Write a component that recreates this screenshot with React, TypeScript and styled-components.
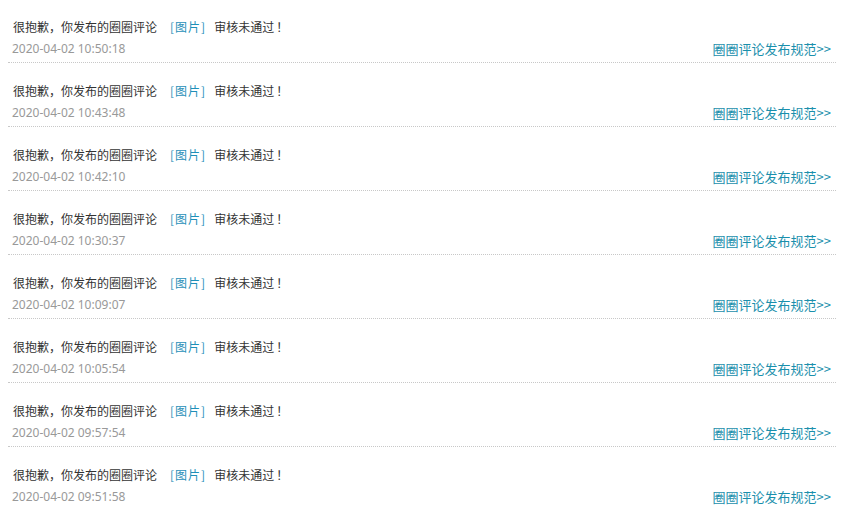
import styled, { createGlobalStyle } from 'styled-components';

const GlobalStyle = createGlobalStyle`
  html, body {
    margin: 0;
    padding: 0;
    background: #fff;
  }
  body {
    font-family: "Microsoft YaHei", "Noto Sans CJK SC", "Liberation Sans", sans-serif;
    font-size: 12px;
  }
`;

const records = [
  '2020-04-02 10:50:18',
  '2020-04-02 10:43:48',
  '2020-04-02 10:42:10',
  '2020-04-02 10:30:37',
  '2020-04-02 10:09:07',
  '2020-04-02 10:05:54',
  '2020-04-02 09:57:54',
  '2020-04-02 09:51:58',
];

const App = () => {
  return (
    <>
      <GlobalStyle />
      <List>
        {records.map((time, index) => (
          <Item key={`msg-${index}`}>
            <Title>
              很抱歉，你发布的圈圈评论<Tag>[图片]</Tag>审核未通过<Bang>！</Bang>
            </Title>
            <Meta>
              <Time>{time}</Time>
              <RuleLink href="#">圈圈评论发布规范&gt;&gt;</RuleLink>
            </Meta>
          </Item>
        ))}
      </List>
    </>
  );
};

export default App;

const List = styled.ul`
  list-style: none;
  margin: 0;
  padding: 0 9px 0 8px;
  width: 828px;
`;

const Item = styled.li`
  height: 63px;
  padding: 16px 0 0 5px;
  box-sizing: border-box;
  border-bottom: 1px dotted #c8c8c8;
  margin-bottom: 1px;
`;

const Title = styled.div`
  height: 22px;
  line-height: 22px;
  color: #333;
  white-space: nowrap;
`;

const Tag = styled.span`
  color: #1f8fb8;
  letter-spacing: 1px;
  margin: 0 8px 0 13px;
`;

const Bang = styled.span`
  margin-left: 2px;
`;

const Meta = styled.div`
  display: flex;
  align-items: center;
  justify-content: space-between;
  height: 22px;
  line-height: 22px;
`;

const Time = styled.span`
  color: #999;
  margin-left: -1px;
  font-family: "Noto Sans", "Liberation Sans", sans-serif;
  font-size: 12px;
`;

const RuleLink = styled.a`
  color: #1a8fac;
  font-size: 13px;
  text-decoration: none;
  margin-right: 5px;
`;
